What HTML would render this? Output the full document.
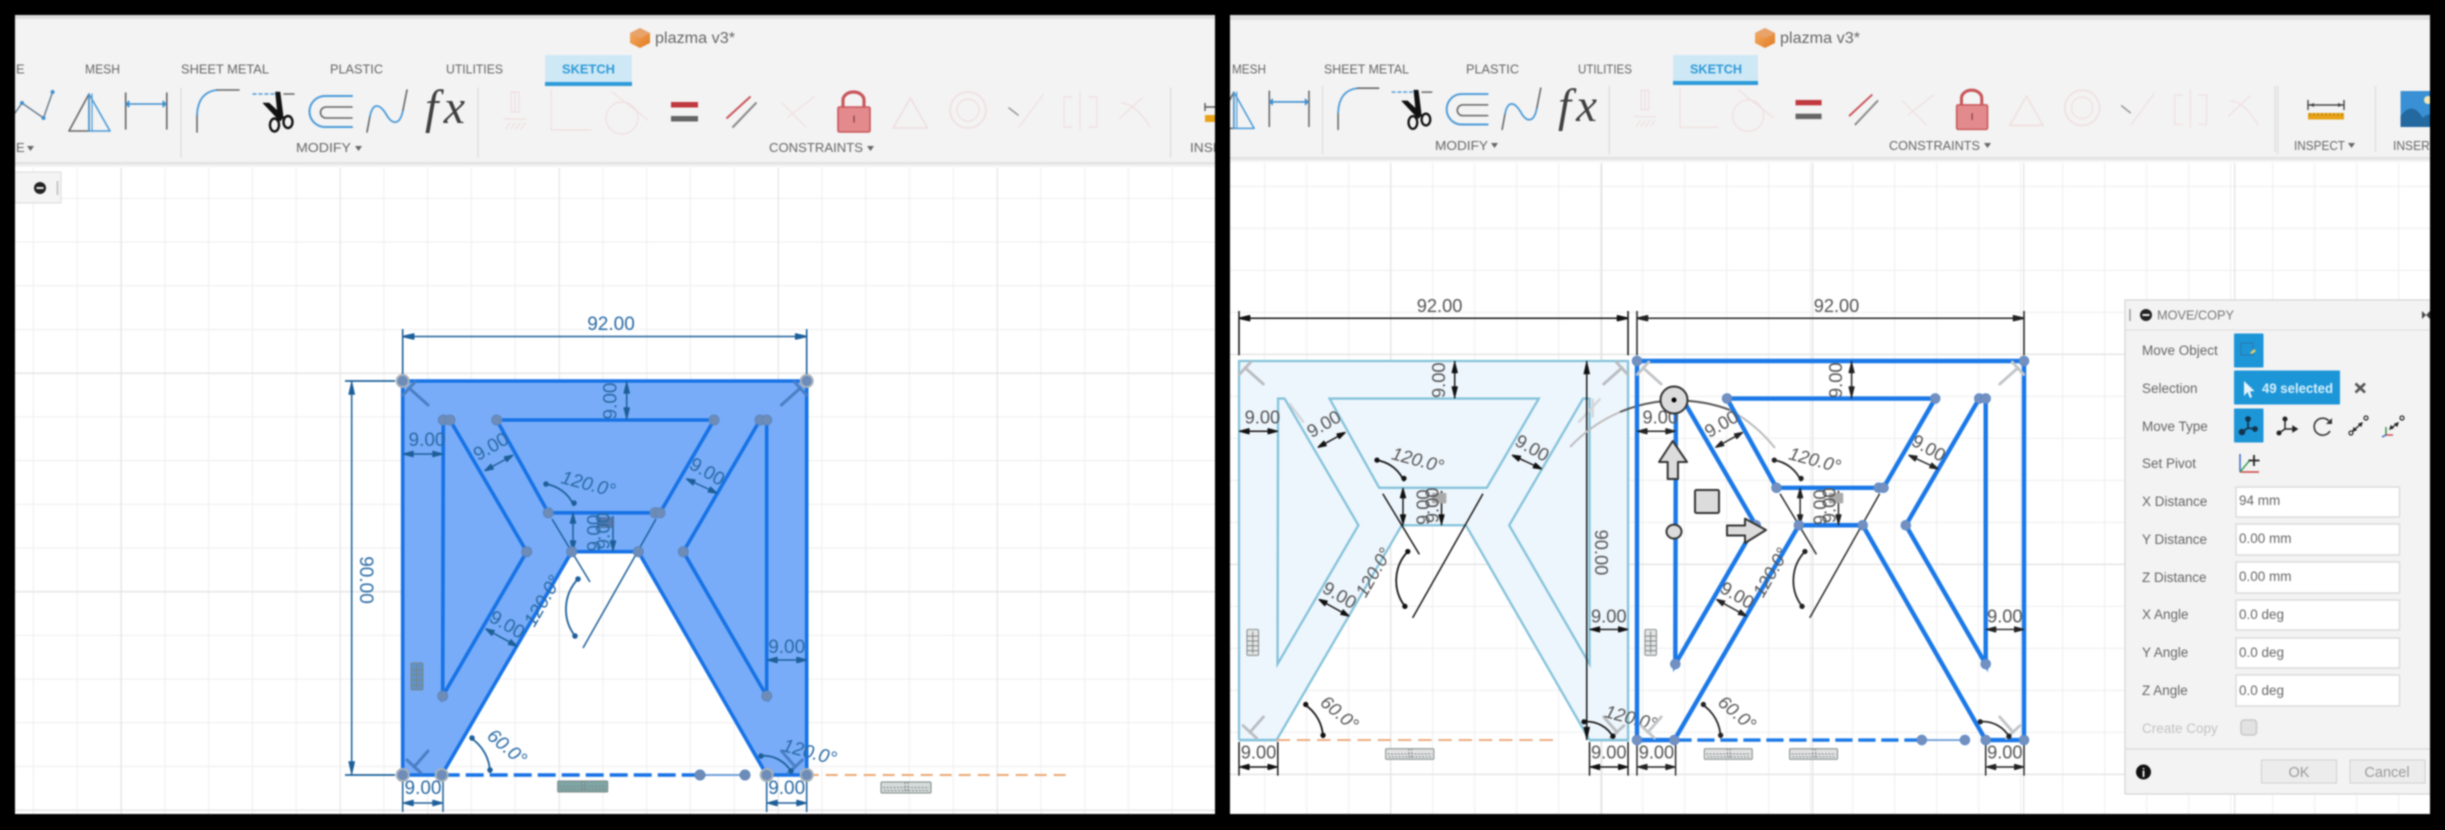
<!DOCTYPE html>
<html><head><meta charset="utf-8"><title>plazma v3*</title>
<style>
html,body{margin:0;padding:0;background:#000;width:2445px;height:830px;overflow:hidden}
svg{display:block;filter:blur(.75px)}
text{font-family:"Liberation Sans",sans-serif}
.tab{font-size:13px;fill:#666;font-weight:400}
.lab{font-size:13px;fill:#666}
.d{font-size:19px;text-anchor:middle}
.i{font-style:italic}
.dl{font-size:13.5px;fill:#666}
.dv{font-size:13.5px;fill:#666}
</style></head><body>
<svg width="2445" height="830" viewBox="0 0 2445 830" xmlns="http://www.w3.org/2000/svg">
<defs>
<pattern id="gl1" patternUnits="userSpaceOnUse" x="120.5" y="372.6" width="43.8" height="43.7"><path d="M.5 0V43.7M0 .5H43.8" stroke="#efefef" stroke-width="1.2" fill="none"/></pattern>
<pattern id="gl2" patternUnits="userSpaceOnUse" x="120.5" y="372.6" width="219" height="218.5"><path d="M.5 0V218.5M0 .5H219" stroke="#e3e3e3" stroke-width="1.6" fill="none"/></pattern>
<pattern id="gr1" patternUnits="userSpaceOnUse" x="1390" y="353.7" width="42" height="42"><path d="M.5 0V42M0 .5H42" stroke="#efefef" stroke-width="1.2" fill="none"/></pattern>
<pattern id="gr2" patternUnits="userSpaceOnUse" x="1390" y="353.7" width="211" height="210"><path d="M.5 0V210M0 .5H211" stroke="#e3e3e3" stroke-width="1.6" fill="none"/></pattern>
<linearGradient id="sh" x1="0" y1="0" x2="0" y2="1"><stop offset="0" stop-color="#dcdcdc"/><stop offset="1" stop-color="#fff"/></linearGradient>
<linearGradient id="cube" x1="0" y1="0" x2="1" y2="1"><stop offset="0" stop-color="#f5b070"/><stop offset="1" stop-color="#e07a1c"/></linearGradient>
<clipPath id="cl"><rect x="15" y="15" width="1200" height="799"/></clipPath>
<clipPath id="cr"><rect x="1230" y="15" width="1200" height="799"/></clipPath>

<!-- toolbar icons, in left-panel coordinates -->
<g id="tbi" fill="none" stroke-linecap="round" stroke-linejoin="round">
  <path d="M15 113L22 103L43.5 118L52.6 92" stroke="#6b7f90" stroke-width="1.5"/>
  <g fill="#3d8fd0"><circle cx="22" cy="103" r="2"/><circle cx="43.5" cy="118" r="2"/><circle cx="52.6" cy="92" r="2"/></g>
  <path d="M89 94L69 131H89Z" stroke="#666" stroke-width="1.6"/>
  <path d="M89 94L110 131H89V94" stroke="#4a9ad8" stroke-width="1.6"/>
  <path d="M92 94V131" stroke="#4a9ad8" stroke-width="1.2"/>
  <path d="M125.7 93V129M166.8 93V129" stroke="#666" stroke-width="1.6"/>
  <path d="M127 104H165" stroke="#3d8fd0" stroke-width="1.6"/>
  <path d="M129 101v6l-3-3zM163 101v6l3-3z" fill="#3d8fd0" stroke="#3d8fd0"/>
  <path d="M181 88V157" stroke="#e0e0e0" stroke-width="1.5"/>
  <path d="M197 132V115" stroke="#666" stroke-width="1.6"/>
  <path d="M197 115Q198 92 217 90" stroke="#4a9ad8" stroke-width="1.8"/>
  <path d="M217 90H239" stroke="#666" stroke-width="1.6"/>
  <path d="M253 94H276" stroke="#4a9ad8" stroke-width="1.4" stroke-dasharray="3 3"/>
  <path d="M284 94H294" stroke="#666" stroke-width="1.5"/>
  <path d="M275.5 92L280 92L283 115L278 117Z" fill="#111" stroke="#111" stroke-width=".6"/>
  <path d="M263 103L269 103L284 117L280 121Z" fill="#111" stroke="#111" stroke-width=".6"/>
  <ellipse cx="274.5" cy="125" rx="4.5" ry="6.5" stroke="#111" stroke-width="2.4"/>
  <ellipse cx="288" cy="122" rx="4.5" ry="6" stroke="#111" stroke-width="2.4"/>
  <path d="M352 96H325A15.5 15.5 0 0 0 325 127H352" stroke="#4a9ad8" stroke-width="2"/>
  <path d="M352 107H326A5.5 5.5 0 0 0 326 118H352" stroke="#666" stroke-width="1.6"/>
  <path d="M367 132L370 116" stroke="#666" stroke-width="1.6"/>
  <path d="M370 116C373 102 380 104 386 114C392 125 400 126 403 110" stroke="#4a9ad8" stroke-width="1.8"/>
  <path d="M403 110L407 90" stroke="#666" stroke-width="1.6"/>
  <path d="M478 88V157" stroke="#e0e0e0" stroke-width="1.5"/>
  <g stroke="#f0e0e1" stroke-width="1.4">
    <path d="M511 92H519V112H511ZM515 92V112M504 119H526M506 129L510 123M511 129L515 123M516 129L520 123M521 129L525 123"/>
    <path d="M551.4 90V130H591"/>
    <circle cx="622" cy="118" r="16"/>
    <path d="M612 92L648 120"/>
    <path d="M782 103L806 127M814 97L788 117"/>
    <path d="M893 128L910.5 98L927.5 128Z" stroke-width="1.8"/>
    <circle cx="968" cy="110" r="18" stroke-width="1.8"/><circle cx="968" cy="110" r="11"/>
    <path d="M1043 95L1019 127"/>
    <path d="M1072 97H1064V127H1072M1089 97H1097V127H1089M1080 92V130"/>
    <path d="M1122 103Q1136 104 1150 127M1120 118L1142 98"/>
  </g>
  <path d="M1009 108L1018 115" stroke="#999" stroke-width="1.6"/>
  <rect x="671" y="102" width="27" height="5.5" fill="#c0393f"/>
  <rect x="671" y="116" width="27" height="5.5" fill="#666"/>
  <path d="M727 118L750 97" stroke="#c9565b" stroke-width="2"/>
  <path d="M733 127L756 103" stroke="#8a8a8a" stroke-width="2"/>
  <path d="M843 107V100A10.5 8 0 0 1 864 100V107" stroke="#c8575b" stroke-width="3.2"/>
  <rect x="838" y="107" width="32" height="25" rx="1.5" fill="#e38a8d" stroke="#c8575b" stroke-width="1.6"/>
  <path d="M854 116V122" stroke="#7a3d3d" stroke-width="1.2"/>
  <path d="M1170.6 88V157" stroke="#e0e0e0" stroke-width="1.5"/>
</g>

<g id="hm"><rect width="50" height="11" rx="1" stroke="#7b8585"/><path d="M2 5.5H48M24 0v11M27 0v11M3 8.5H47" stroke="#7b8585" stroke-dasharray="2 1.5"/></g>
<g id="vm"><rect width="12" height="27" rx="1.5" stroke="#7b8585"/><path d="M6 2V25M0 7H12M0 12H12M0 17H12M0 22H12" stroke="#7b8585"/></g>

<!-- tee corner marks -->
<g id="tees" fill="none" stroke-width="3" stroke-linecap="round">
  <path d="M409 388L428 405M403 395L415 382"/>
  <path d="M800.4 388L781.4 405M806.4 395L794.4 382"/>
  <path d="M414 767L428 751M407 760L421 773"/>
  <path d="M795.4 767L781.4 751M802.4 760L788.4 773"/>
</g>

<!-- dimension lines with arrowheads; colour comes from the referencing group -->
<g id="dims" stroke="currentColor" stroke-width="1.5" fill="currentColor" stroke-linejoin="round">
  <path stroke-width="1.6" d="M402.7 336.5H806.7M402.7 336.5l11-2.5v5zM806.7 336.5l-11-2.5v5zM402.7 329V375M806.7 329V375"/>
  <path d="M626.7 381V420M626.7 383l-2.5 10h5zM626.7 418l-2.5-10h5z"/>
  <path d="M402.7 454H443M404 454l9-2.5v5zM442 454l-9-2.5v5z"/>
  <path d="M485 470.6L512.7 455.4M485 470.6L493.2 468.9L490.8 464.5ZM512.7 455.4L506.9 461.4L504.5 457Z"/>
  <path d="M686.7 479L716.7 493M686.7 479L692.9 484.7L695 480.1ZM716.7 493L708.3 491.9L710.5 487.3Z"/>
  <path d="M486 629L516.7 646M486 629L491.8 635.1L494.2 630.7ZM516.7 646L508.5 644.3L510.9 639.9Z"/>
  <path d="M766.7 660H806.7M768 660l9-2.5v5zM806 660l-9-2.5v5z"/>
  <path d="M402.7 803H443M404 803l9-2.5v5zM442 803l-9-2.5v5zM402.7 777V812M443 777V812"/>
  <path d="M766.7 803H806.7M768 803l9-2.5v5zM806 803l-9-2.5v5zM766.7 777V812M806.7 777V812"/>
  <path d="M573 512.8V551.7M573 514l-2.5 9h5zM573 550l-2.5-9h5z"/>
  <path d="M613 516V551.7M613 550l-2.5-9h5z"/>
  <path d="M552 519L590 582M656 519L583 648" fill="none"/>
  <path d="M545 484A36 36 0 0 1 574 506" fill="none" stroke-width="1.8"/>
  <path d="M578 579A44 44 0 0 0 575 636" fill="none" stroke-width="1.8"/>
  <path d="M470 737.5A42 42 0 0 1 490 773" fill="none" stroke-width="1.8"/>
  <path d="M760 756A32 32 0 0 1 792 773" fill="none" stroke-width="1.8"/>
  <circle cx="546" cy="484" r="2"/><circle cx="574" cy="503" r="2"/><circle cx="578" cy="579" r="2"/><circle cx="575" cy="636" r="2"/><circle cx="472" cy="738" r="2"/><circle cx="490" cy="770" r="2"/><circle cx="761" cy="756" r="2"/><circle cx="791" cy="771" r="2"/>
</g>

<g id="pts">
  <circle cx="443.3" cy="420" r="5"/><circle cx="450" cy="420" r="5"/><circle cx="496.7" cy="420" r="5"/><circle cx="714" cy="420" r="5"/><circle cx="760" cy="420" r="5"/><circle cx="766.7" cy="420" r="5"/>
  <circle cx="548.3" cy="512.8" r="5"/><circle cx="655" cy="512.8" r="5"/><circle cx="660" cy="512.8" r="5"/>
  <circle cx="571.7" cy="551.7" r="5"/><circle cx="638.3" cy="551.7" r="5"/><circle cx="526.7" cy="551.7" r="5"/><circle cx="683.3" cy="551.7" r="5"/>
  <circle cx="442.7" cy="696" r="5"/><circle cx="766.7" cy="696" r="5"/>
  <circle cx="700" cy="775" r="5"/><circle cx="745" cy="775" r="5"/>
  <circle cx="402.7" cy="381" r="5"/><circle cx="806.7" cy="381" r="5"/><circle cx="402.7" cy="775" r="5"/><circle cx="441.7" cy="775" r="5"/><circle cx="766.7" cy="775" r="5"/><circle cx="806.7" cy="775" r="5"/>
</g>

<g id="shape" fill="none">
  <path d="M402.7 775V381H806.7V775H766.7M638.3 551.7L766.7 775M571.7 551.7L441.7 775H402.7"/>
  <path d="M443.3 420H450L526.7 551.7L442.7 696Z"/>
  <path d="M766.7 420H760L683.3 551.7L766.7 696Z"/>
  <path d="M548.3 512.8L496.7 420H714L660 512.8Z"/>
  <path d="M571.7 551.7H638.3"/>
</g>
</defs>

<rect width="2445" height="830" fill="#000"/>

<!-- LEFT PANEL -->
<g clip-path="url(#cl)">
  <rect x="15" y="15" width="1200" height="799" fill="#fff"/>
  <rect x="15" y="165" width="1200" height="649" fill="url(#gl1)"/>
  <rect x="15" y="165" width="1200" height="649" fill="url(#gl2)"/>
  <rect x="15" y="15" width="1200" height="147" fill="#f3f3f3"/>
  <rect x="15" y="162" width="1200" height="6" fill="url(#sh)"/>
  <rect x="15" y="15" width="1200" height="4" fill="#dedede"/>

  <rect x="545" y="55" width="87" height="28" fill="#cfe8f6"/>
  <rect x="545" y="82" width="87" height="4" fill="#2d9ad8"/>
  <text class="tab" x="16" y="73.5">E</text>
  <text class="tab" x="85" y="73.5" textLength="35" lengthAdjust="spacingAndGlyphs">MESH</text>
  <text class="tab" x="181" y="73.5" textLength="88" lengthAdjust="spacingAndGlyphs">SHEET METAL</text>
  <text class="tab" x="330" y="73.5" textLength="53" lengthAdjust="spacingAndGlyphs">PLASTIC</text>
  <text class="tab" x="446" y="73.5" textLength="57" lengthAdjust="spacingAndGlyphs">UTILITIES</text>
  <text class="tab" x="562" y="73.5" textLength="53" lengthAdjust="spacingAndGlyphs" style="fill:#2f9bd8;font-weight:700">SKETCH</text>
  <g transform="translate(630 28)"><path d="M10 0L20 5V15L10 20L0 15V5Z" fill="url(#cube)"/><path d="M10 0L20 5L10 10L0 5Z" fill="#e8a36c"/></g>
  <text x="655" y="43" font-size="15.5" fill="#666" textLength="80" lengthAdjust="spacingAndGlyphs">plazma v3*</text>
  <use href="#tbi"/>
  <text x="425" y="123" font-size="48" fill="#3f3f3f" textLength="40" lengthAdjust="spacing" style="font-family:'Liberation Serif',serif;font-style:italic">fx</text>
  <text class="lab" x="16" y="152">E</text><path d="M27 146h7l-3.5 5z" fill="#666"/>
  <text class="lab" x="296" y="152" textLength="55" lengthAdjust="spacingAndGlyphs">MODIFY</text><path d="M355 146h7l-3.5 5z" fill="#666"/>
  <text class="lab" x="769" y="152" textLength="94" lengthAdjust="spacingAndGlyphs">CONSTRAINTS</text><path d="M867 146h7l-3.5 5z" fill="#666"/>
  <text class="lab" x="1190" y="152" textLength="32" lengthAdjust="spacingAndGlyphs">INSP</text>
  <path d="M1205 103v8M1205 107h12" stroke="#555" stroke-width="1.4"/>
  <rect x="1205" y="115" width="12" height="7" fill="#e8a317"/>

  <rect x="14" y="172" width="47" height="31" fill="#f4f4f4" stroke="#dcdcdc"/>
  <circle cx="40" cy="188" r="6" fill="#222"/><rect x="36.5" y="187" width="7" height="2" fill="#eee"/>
  <path d="M57.5 181V195" stroke="#bbb" stroke-width="1.5"/>

  <!-- sketch A : selected, solid blue -->
  <path d="M806.7 775H1072" stroke="#e9a873" stroke-width="2" stroke-dasharray="12 7" fill="none"/>
  <use href="#hm" x="881" y="782" fill="#d5dada"/>
  <path d="M402.7 381H806.7V775H766.7L638.3 551.7H571.7L441.7 775H402.7Z" fill="#78acf8"/>
  <use href="#shape" stroke="#1672e6" stroke-width="3.6"/>
  <path d="M441.7 775H700" stroke="#1672e6" stroke-width="3.4" stroke-dasharray="18 6" fill="none"/>
  <path d="M700 775H745" stroke="#6f9fd8" stroke-width="2" fill="none"/>
  <use href="#tees" stroke="#4a7fc4"/>
  <use href="#dims" color="#1d5f99"/>
  <path d="M345 381H395M345 775H395" stroke="#1d5f99" stroke-width="1.8"/>
  <path d="M351.7 381V775M351.7 383l-2.5 11h5zM351.7 773l-2.5-11h5z" stroke="#1d5f99" fill="#1d5f99" stroke-width="1.5"/>
  <use href="#pts" fill="#6e8cb8" stroke="#5e86bb"/>
  <g fill="none" stroke="#a8b0b8" stroke-width="2"><circle cx="402.7" cy="381" r="6"/><circle cx="806.7" cy="381" r="6"/><circle cx="402.7" cy="775" r="6"/><circle cx="441.7" cy="775" r="6"/><circle cx="766.7" cy="775" r="6"/><circle cx="806.7" cy="775" r="6"/></g>
  <use href="#hm" x="557.7" y="781" fill="#7fa5a5"/>
  <use href="#vm" x="411" y="663" fill="#5f92c8"/>
  <rect x="597" y="517" width="17" height="11" rx="1" fill="#4d6f9c" opacity=".85"/>
  <g fill="#2a6aa5">
    <text class="d" x="611" y="330">92.00</text>
    <text class="d" transform="translate(366.7 580) rotate(90)" dy=".35em">90.00</text>
    <text class="d" transform="translate(610 401) rotate(-90)" dy=".35em">9.00</text>
    <text class="d" x="427" y="446">9.00</text>
    <text class="d" transform="translate(494 452) rotate(-30)">9.00</text>
    <text class="d" transform="translate(704 477) rotate(30)">9.00</text>
    <text class="d" transform="translate(504 630) rotate(30)">9.00</text>
    <text class="d" x="786.7" y="653">9.00</text>
    <text class="d" x="423" y="794">9.00</text>
    <text class="d" x="786.7" y="794">9.00</text>
    <text class="d" transform="translate(594 533) rotate(-90)" dy=".35em">9.00</text>
    <text class="d" transform="translate(603 531) rotate(-90)" dy=".35em">9.00</text>
    <text class="d i" transform="translate(586.7 490) rotate(15)">120.0°</text>
    <text class="d i" transform="translate(548 604) rotate(-60)">120.0°</text>
    <text class="d i" transform="translate(503 752) rotate(40)">60.0°</text>
    <text class="d i" transform="translate(808 758) rotate(15)">120.0°</text>
  </g>
</g>

<!-- RIGHT PANEL -->
<g clip-path="url(#cr)">
  <rect x="1230" y="15" width="1200" height="799" fill="#fff"/>
  <rect x="1230" y="160" width="1200" height="654" fill="url(#gr1)"/>
  <rect x="1230" y="160" width="1200" height="654" fill="url(#gr2)"/>
  <rect x="1230" y="15" width="1200" height="142" fill="#f3f3f3"/>
  <rect x="1230" y="157" width="1200" height="6" fill="url(#sh)"/>
  <rect x="1230" y="15" width="1200" height="5" fill="#dedede"/>

  <rect x="1673" y="55" width="85" height="27" fill="#cfe8f6"/>
  <rect x="1673" y="81" width="85" height="4" fill="#2d9ad8"/>
  <text class="tab" x="1232" y="73.5" textLength="34" lengthAdjust="spacingAndGlyphs">MESH</text>
  <text class="tab" x="1324" y="73.5" textLength="85" lengthAdjust="spacingAndGlyphs">SHEET METAL</text>
  <text class="tab" x="1466" y="73.5" textLength="53" lengthAdjust="spacingAndGlyphs">PLASTIC</text>
  <text class="tab" x="1578" y="73.5" textLength="54" lengthAdjust="spacingAndGlyphs">UTILITIES</text>
  <text class="tab" x="1690" y="73.5" textLength="52" lengthAdjust="spacingAndGlyphs" style="fill:#2f9bd8;font-weight:700">SKETCH</text>
  <g transform="translate(1755 28)"><path d="M10 0L20 5V15L10 20L0 15V5Z" fill="url(#cube)"/><path d="M10 0L20 5L10 10L0 5Z" fill="#e8a36c"/></g>
  <text x="1780" y="43" font-size="15.5" fill="#666" textLength="80" lengthAdjust="spacingAndGlyphs">plazma v3*</text>
  <use href="#tbi" transform="matrix(.965 0 0 .98 1148 0)"/>
  <text x="1558" y="121" font-size="47" fill="#3f3f3f" textLength="39" lengthAdjust="spacing" style="font-family:'Liberation Serif',serif;font-style:italic">fx</text>
  <text class="lab" x="1435" y="150" textLength="53" lengthAdjust="spacingAndGlyphs">MODIFY</text><path d="M1491 143h7l-3.5 5z" fill="#666"/>
  <text class="lab" x="1889" y="150" textLength="91" lengthAdjust="spacingAndGlyphs">CONSTRAINTS</text><path d="M1984 143h7l-3.5 5z" fill="#666"/>
  <path d="M2275 86V152M2375.5 86V152" stroke="#e0e0e0" stroke-width="1.5"/>
  <path d="M2308 100V110M2344 100V110M2308 105H2344" stroke="#444" stroke-width="1.4"/>
  <path d="M2309 105l5-2v4zM2343 105l-5-2v4z" fill="#444"/>
  <rect x="2308" y="113" width="36" height="6.5" fill="#e8a317"/>
  <path d="M2310 113v3M2314 113v3M2318 113v3M2322 113v3M2326 113v3M2330 113v3M2334 113v3M2338 113v3M2342 113v3" stroke="#a87510" stroke-width=".8"/>
  <text class="lab" x="2294" y="150" textLength="51" lengthAdjust="spacingAndGlyphs">INSPECT</text><path d="M2348 143h7l-3.5 5z" fill="#666"/>
  <rect x="2400.6" y="91" width="35" height="36" fill="#3a90d4"/>
  <path d="M2400.6 116Q2412 100 2423 118Q2428 112 2436 116V127H2400.6Z" fill="#23689f"/>
  <circle cx="2428" cy="100" r="4" fill="#f1e9b5"/>
  <text class="lab" x="2393" y="150" textLength="44" lengthAdjust="spacingAndGlyphs">INSERT</text>

  <!-- sketch B : ghost copy -->
  <g transform="matrix(.963 0 0 .962 851.2 -5.5)">
    <path d="M402.7 381H806.7V775H766.7L638.3 551.7H571.7L441.7 775H402.7Z" fill="#eef6fd"/>
    <use href="#shape" stroke="#84c2da" stroke-width="2.4"/>
    <path d="M402.7 775H441.7M766.7 775H806.7" stroke="#84c2da" stroke-width="2.4"/>
    <path d="M441.7 775H735" stroke="#eaa878" stroke-width="2" stroke-dasharray="14 7" fill="none"/>
    <use href="#tees" stroke="#b9bdc0"/>
    <path d="M455 425L470 445M755 445L778 420M770 420V440" fill="none" stroke="#d3d6d9" stroke-width="2.5"/>
    <use href="#dims" color="#111"/>
    <path d="M763.8 381V775M763.8 383l-2.5 11h5zM763.8 773l-2.5-11h5z" stroke="#111" fill="#111" stroke-width="1.5"/>
    <use href="#hm" x="555" y="784" fill="#e2e2e2"/>
    <use href="#vm" x="411" y="660" fill="#e5e5e5"/>
    <rect x="603" y="518" width="15" height="11" rx="1" fill="#aaa"/>
    <g fill="#555">
      <text class="d" x="611" y="330">92.00</text>
      <text class="d" transform="translate(779 580) rotate(90)" dy=".35em">90.00</text>
      <text class="d" transform="translate(610 401) rotate(-90)" dy=".35em">9.00</text>
      <text class="d" x="427" y="446">9.00</text>
      <text class="d" transform="translate(494 452) rotate(-30)">9.00</text>
      <text class="d" transform="translate(704 477) rotate(30)">9.00</text>
      <text class="d" transform="translate(504 630) rotate(30)">9.00</text>
      <text class="d" x="786.7" y="653">9.00</text>
      <text class="d" x="423" y="794">9.00</text>
      <text class="d" x="786.7" y="794">9.00</text>
      <text class="d" transform="translate(594 533) rotate(-90)" dy=".35em">9.00</text>
      <text class="d" transform="translate(603 531) rotate(-90)" dy=".35em">9.00</text>
      <text class="d i" transform="translate(586.7 490) rotate(15)">120.0°</text>
      <text class="d i" transform="translate(548 604) rotate(-60)">120.0°</text>
      <text class="d i" transform="translate(503 752) rotate(40)">60.0°</text>
      <text class="d i" transform="translate(808 758) rotate(15)">120.0°</text>
    </g>
  </g>

  <!-- sketch C : moved copy -->
  <path d="M1570 447A150 150 0 0 1 1620 412" fill="none" stroke="#bbb" stroke-width="2"/>
  <path d="M1620 412A150 150 0 0 1 1730 410" fill="none" stroke="#555" stroke-width="2"/>
  <path d="M1730 410A150 150 0 0 1 1775 448" fill="none" stroke="#bbb" stroke-width="2"/>
  <g transform="matrix(.958 0 0 .962 1251.2 -5.5)">
    <use href="#shape" stroke="#1a78e8" stroke-width="4.6"/>
    <path d="M441.7 775H700" stroke="#1a78e8" stroke-width="3.6" stroke-dasharray="18 6" fill="none"/>
    <path d="M700 775H745" stroke="#6f9fd8" stroke-width="2" fill="none"/>
    <use href="#tees" stroke="#c2c5c8"/>
    <use href="#dims" color="#222"/>
    <use href="#pts" fill="#7390c0" stroke="#5c8ac8"/>
    <use href="#hm" x="473" y="784" fill="#e2e2e2"/>
    <use href="#hm" x="562" y="784" fill="#e2e2e2"/>
    <use href="#vm" x="411" y="660" fill="#e5e5e5"/>
    <rect x="603" y="518" width="15" height="11" rx="1" fill="#aaa"/>
    <g fill="#555">
      <text class="d" x="611" y="330">92.00</text>
      <text class="d" transform="translate(610 401) rotate(-90)" dy=".35em">9.00</text>
      <text class="d" x="427" y="446">9.00</text>
      <text class="d" transform="translate(494 452) rotate(-30)">9.00</text>
      <text class="d" transform="translate(704 477) rotate(30)">9.00</text>
      <text class="d" transform="translate(504 630) rotate(30)">9.00</text>
      <text class="d" x="786.7" y="653">9.00</text>
      <text class="d" x="423" y="794">9.00</text>
      <text class="d" x="786.7" y="794">9.00</text>
      <text class="d" transform="translate(594 533) rotate(-90)" dy=".35em">9.00</text>
      <text class="d" transform="translate(603 531) rotate(-90)" dy=".35em">9.00</text>
      <text class="d i" transform="translate(586.7 490) rotate(15)">120.0°</text>
      <text class="d i" transform="translate(548 604) rotate(-60)">120.0°</text>
      <text class="d i" transform="translate(503 752) rotate(40)">60.0°</text>
    </g>
  </g>

  <!-- move gizmo -->
  <g stroke="#333" stroke-width="2" fill="#dcdcdc" stroke-linejoin="round">
    <circle cx="1674" cy="400" r="13.5"/>
    <path d="M1672.7 441L1687 462H1678V479H1667.7V462H1659Z"/>
    <rect x="1695" y="490" width="24" height="23" rx="1.5"/>
    <path d="M1766 530L1745 543V535.5H1727V525.5H1745V518.6Z"/>
    <ellipse cx="1674" cy="531.6" rx="7.5" ry="7"/>
  </g>
  <circle cx="1674" cy="400" r="2.5" fill="#000"/>

  <!-- MOVE/COPY dialog -->
  <rect x="2125" y="300" width="310" height="494" fill="#f3f3f3" stroke="#cfcfcf"/>
  <path d="M2130 309V321" stroke="#999" stroke-width="1.5"/>
  <circle cx="2146" cy="315" r="6" fill="#222"/><rect x="2142.5" y="314" width="7" height="2" fill="#eee"/>
  <text x="2157" y="319.5" font-size="12.5" fill="#777" textLength="77" lengthAdjust="spacingAndGlyphs">MOVE/COPY</text>
  <path d="M2422 311v8l4-4zM2430 311v8l-4-4z" fill="#444"/>
  <path d="M2125 330H2430" stroke="#dedede"/>

  <g>
    <text class="dl" x="2142" y="355">Move Object</text>
    <text class="dl" x="2142" y="393">Selection</text>
    <text class="dl" x="2142" y="431">Move Type</text>
    <text class="dl" x="2142" y="468">Set Pivot</text>
    <text class="dl" x="2142" y="506">X Distance</text>
    <text class="dl" x="2142" y="544">Y Distance</text>
    <text class="dl" x="2142" y="582">Z Distance</text>
    <text class="dl" x="2142" y="619">X Angle</text>
    <text class="dl" x="2142" y="657">Y Angle</text>
    <text class="dl" x="2142" y="695">Z Angle</text>
    <text class="dl" x="2142" y="733" style="fill:#c2c2c2">Create Copy</text>
  </g>

  <rect x="2234" y="333.5" width="29.5" height="34" rx="1" fill="#1d96d8"/>
  <rect x="2241" y="343" width="12" height="12" fill="none" stroke="#2a7ab0" stroke-width="1.2"/>
  <path d="M2250 353l4-4 2 2-4 3z" fill="#e8d060"/>
  <rect x="2234" y="370.5" width="106" height="34" rx="1" fill="#1d96d8"/>
  <path d="M2244 381L2244 396L2247.5 392L2250 398L2252 397L2250 391.5L2254.5 391Z" fill="#fff" opacity=".9"/>
  <text x="2262" y="393" font-size="13.5" font-weight="700" fill="#d8f0fb" textLength="71" lengthAdjust="spacingAndGlyphs">49 selected</text>
  <path d="M2355.5 383.5L2365 392.5M2365 383.5L2355.5 392.5" stroke="#555" stroke-width="2.6"/>
  <rect x="2234" y="408.5" width="29.5" height="34" rx="1" fill="#1d96d8"/>
  <g stroke="#14344d" stroke-width="1.8" fill="#14344d">
    <path d="M2248 419V428M2248 428L2242 432M2248 428L2255 429" fill="none"/>
    <circle cx="2248" cy="419" r="2"/><circle cx="2242" cy="432" r="2.4"/><circle cx="2255" cy="429" r="2"/>
  </g>
  <g stroke="#222" stroke-width="1.5" fill="#222">
    <path d="M2285 420V429M2285 429L2279 433M2285 429L2293 429" fill="none"/>
    <circle cx="2285" cy="419" r="1.8"/><circle cx="2279" cy="433" r="1.8"/><path d="M2293 426.5l4 2.5-4 2.5z"/>
  </g>
  <path d="M2329 421A8.5 8.5 0 1 0 2330 431" fill="none" stroke="#333" stroke-width="1.6"/><path d="M2326 424h6v-6z" fill="#333"/>
  <g stroke="#222" stroke-width="1.2"><path d="M2353 431L2362 423"/><circle cx="2351" cy="433" r="2" fill="none"/><circle cx="2366" cy="418" r="2" fill="none"/><path d="M2353 431l3-1-2-2zM2362 423l-3 1 2 2z" fill="#222"/></g>
  <g stroke="#222" stroke-width="1.2"><path d="M2390 429L2398 423"/><circle cx="2402" cy="418" r="2" fill="none"/><path d="M2390 429l3-1-2-2zM2398 423l-3 1 2 2z" fill="#222"/></g>
  <path d="M2386 427V435" stroke="#2a8a3a" stroke-width="1.4"/><path d="M2386 435H2393" stroke="#d04040" stroke-width="1.4"/><path d="M2386 435L2382 437" stroke="#3060c0" stroke-width="1.4"/>
  <path d="M2240 454V472" stroke="#3060c0" stroke-width="1.4"/><path d="M2240 472H2259" stroke="#d04040" stroke-width="1.6"/><path d="M2240 472L2250 460" stroke="#30a050" stroke-width="1.4"/>
  <path d="M2254 455V466M2248.5 460.5H2259.5" stroke="#222" stroke-width="1.8"/>

  <g fill="#fff" stroke="#dcdcdc" stroke-width="1.5">
    <rect x="2236" y="487" width="163.5" height="30"/>
    <rect x="2236" y="524" width="163.5" height="31"/>
    <rect x="2236" y="562" width="163.5" height="31"/>
    <rect x="2236" y="600" width="163.5" height="30"/>
    <rect x="2236" y="638" width="163.5" height="30"/>
    <rect x="2236" y="675" width="163.5" height="31"/>
  </g>
  <text class="dv" x="2239" y="505">94 mm</text>
  <text class="dv" x="2239" y="543">0.00 mm</text>
  <text class="dv" x="2239" y="581">0.00 mm</text>
  <text class="dv" x="2239" y="619">0.0 deg</text>
  <text class="dv" x="2239" y="657">0.0 deg</text>
  <text class="dv" x="2239" y="695">0.0 deg</text>
  <rect x="2241" y="720" width="15.5" height="15" rx="3" fill="#e2e2e2" stroke="#c8c8c8" stroke-width="1.5"/>
  <path d="M2125 749H2430" stroke="#dcdcdc" stroke-width="1.5"/>
  <circle cx="2143.5" cy="772" r="7.5" fill="#111"/>
  <text x="2143.5" y="777" font-size="12" font-weight="700" fill="#fff" text-anchor="middle">i</text>
  <rect x="2261.5" y="760" width="75" height="23" fill="#ececec" stroke="#d0d0d0"/>
  <text x="2299" y="777" font-size="14.5" fill="#999" text-anchor="middle">OK</text>
  <rect x="2350" y="760" width="75" height="23" fill="#ececec" stroke="#d0d0d0"/>
  <text x="2387" y="777" font-size="14.5" fill="#999" text-anchor="middle">Cancel</text>
</g>
</svg>
</body></html>
